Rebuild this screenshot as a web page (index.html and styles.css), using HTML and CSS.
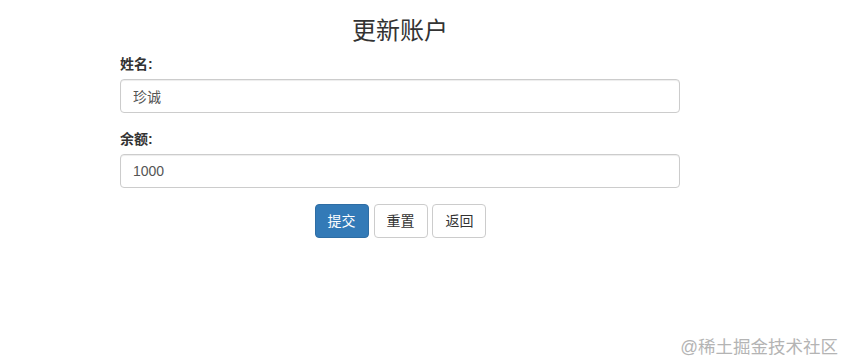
FILE: index.html
```html
<!DOCTYPE html>
<html lang="zh-CN">
<head>
  <meta charset="UTF-8">
  <title>更新账户</title>
  <link rel="stylesheet" href="styles.css">
</head>
<body>

<div class="container">
  <h3 class="title">更新账户</h3>
  <form id="account-form">
    <div class="form-group">
      <label for="name">姓名:</label>
      <input type="text" id="name" class="form-control" value="珍诚">
    </div>
    <div class="form-group">
      <label for="balance">余额:</label>
      <input type="text" id="balance" class="form-control" value="1000">
    </div>
    <div class="actions">
      <button type="submit" class="btn btn-primary">提交</button>
      <button type="reset" class="btn">重置</button>
      <button type="button" class="btn">返回</button>
    </div>
  </form>
</div>

<div class="watermark">@稀土掘金技术社区</div>

</body>
</html>
```

FILE: styles.css
```css
body {
  font-family: "Liberation Sans", "Noto Sans CJK SC", sans-serif;
  font-size: 14px;
  line-height: 20px;
  color: #333;
  background: #fff;
  margin: 0;
}

.container {
  width: 560px;
  margin-left: 120px;
}

.title {
  text-align: center;
  font-size: 24px;
  font-weight: normal;
  line-height: 26px;
  margin: 18px 0 10px;
}

.form-group {
  margin-bottom: 16px;
}

label {
  display: block;
  font-weight: bold;
  margin-bottom: 5px;
}

.form-control {
  display: block;
  box-sizing: border-box;
  width: 100%;
  height: 34px;
  padding: 6px 12px;
  font-family: inherit;
  font-size: 14px;
  color: #555;
  background: #fff;
  border: 1px solid #ccc;
  border-radius: 4px;
  box-shadow: inset 0 1px 1px rgba(0,0,0,0.075);
  outline: none;
}

.actions {
  text-align: center;
}

.btn {
  display: inline-block;
  box-sizing: border-box;
  height: 34px;
  padding: 6px 12px;
  margin: 0 0 0 1px;
  font-family: inherit;
  font-size: 14px;
  line-height: 20px;
  color: #333;
  background: #fff;
  border: 1px solid #ccc;
  border-radius: 4px;
  cursor: pointer;
}

.btn-primary {
  color: #fff;
  background: #337ab7;
  border-color: #2e6da4;
}

.watermark {
  position: absolute;
  right: 6px;
  bottom: 6px;
  font-size: 17.5px;
  line-height: 20px;
  color: #b4b4b4;
}
```
